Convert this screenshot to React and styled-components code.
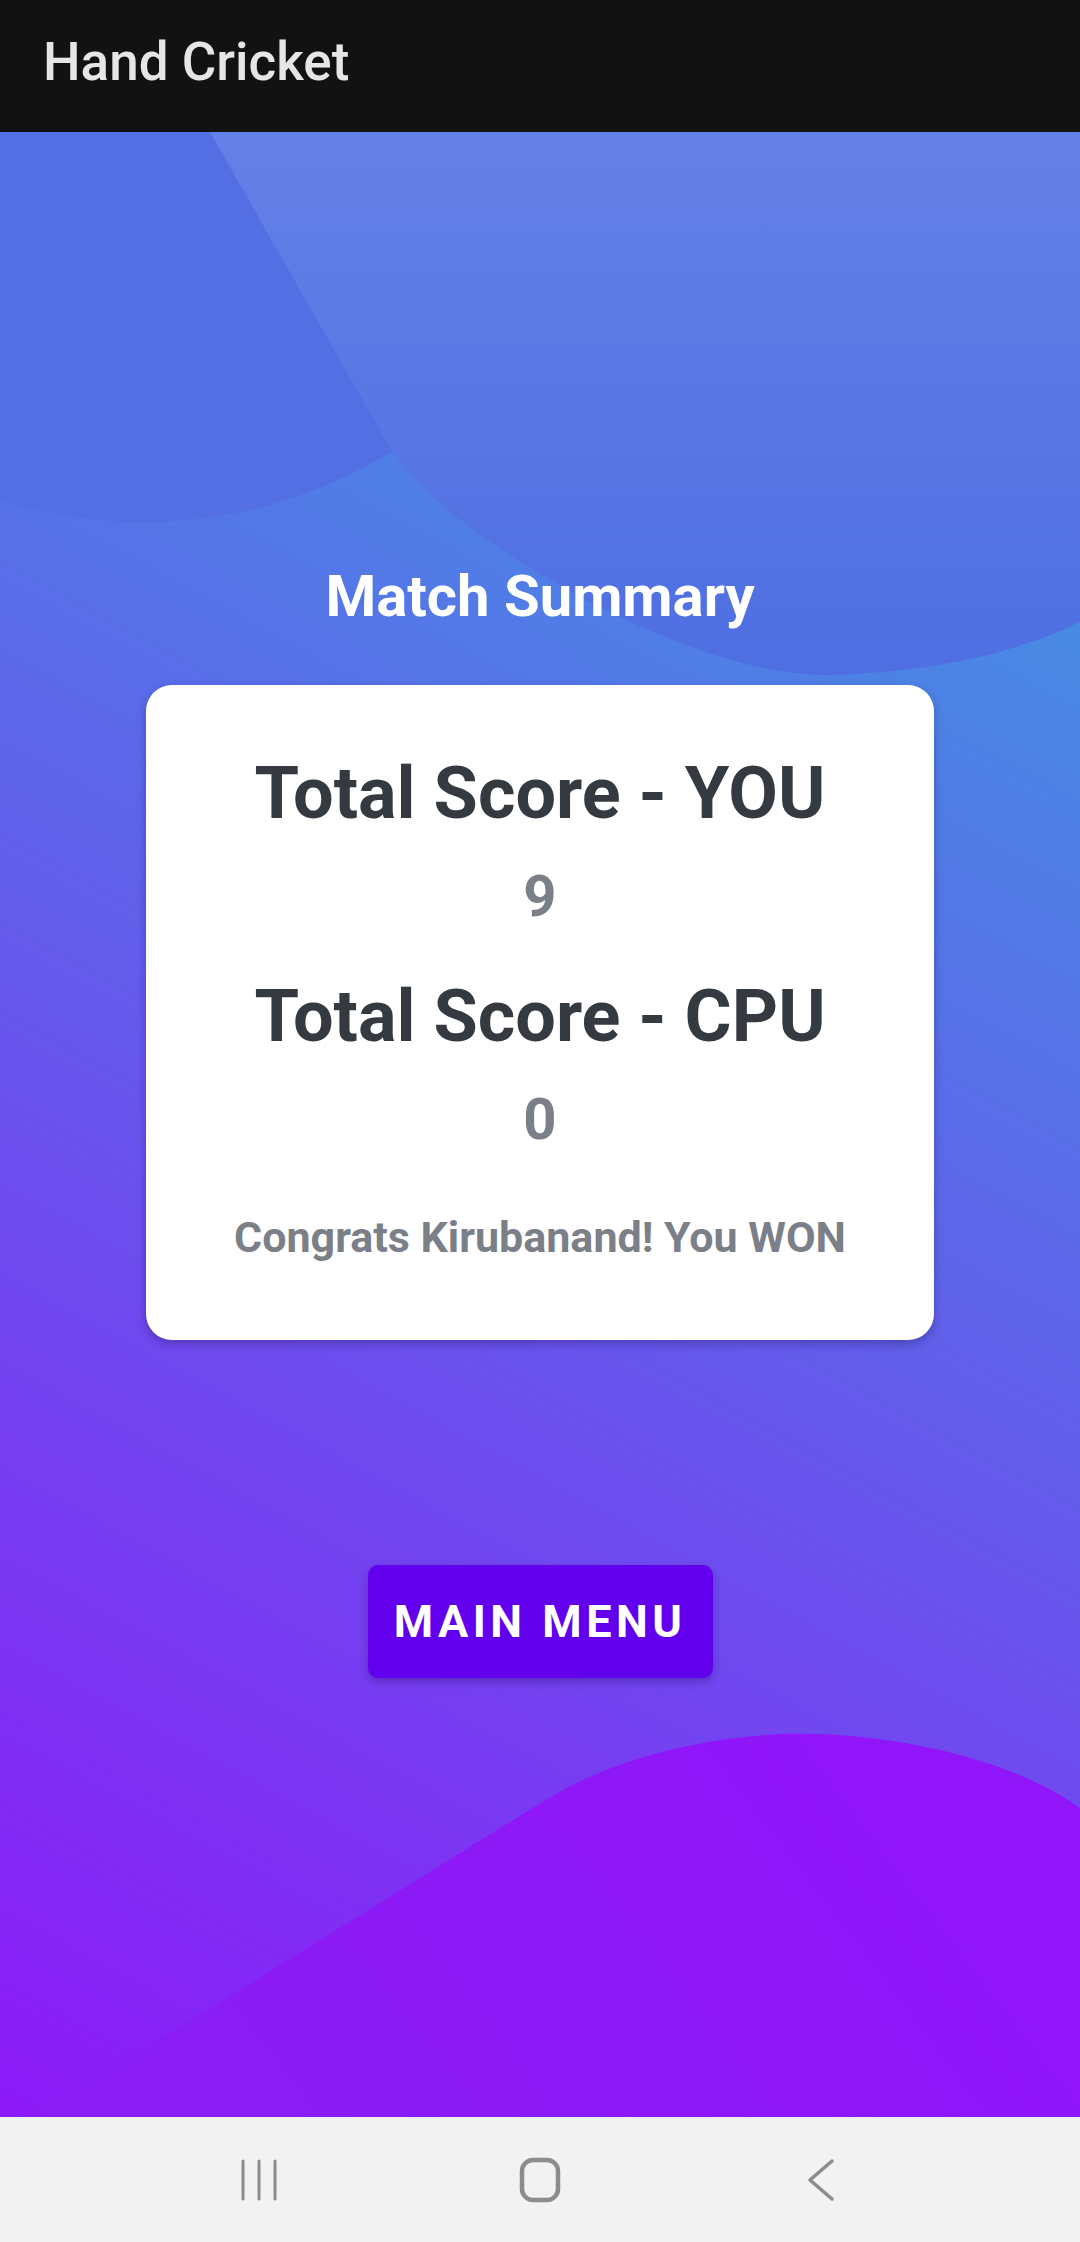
import styled, { createGlobalStyle } from "styled-components";

const GlobalStyle = createGlobalStyle`
  html, body {
    margin: 0;
    padding: 0;
    background: #121212;
  }
  body {
    font-family: Roboto, "Noto Sans", "Liberation Sans", sans-serif;
  }
  * {
    box-sizing: border-box;
  }
`;

const Backdrop = () => (
  <Decor viewBox="0 0 1080 1985" preserveAspectRatio="none">
    <defs>
      <linearGradient
        id="base"
        gradientUnits="userSpaceOnUse"
        x1="1080"
        y1="0"
        x2="0"
        y2="1985"
      >
        <stop offset="0" stopColor="#39a5df" />
        <stop offset="0.5" stopColor="#6160eb" />
        <stop offset="1" stopColor="#8d19f8" />
      </linearGradient>
      <linearGradient
        id="topWave"
        gradientUnits="userSpaceOnUse"
        x1="0"
        y1="0"
        x2="0"
        y2="545"
      >
        <stop offset="0" stopColor="#6581e7" />
        <stop offset="1" stopColor="#4e6ee2" />
      </linearGradient>
      <linearGradient
        id="lowWave"
        gradientUnits="userSpaceOnUse"
        x1="800"
        y1="1600"
        x2="300"
        y2="1985"
      >
        <stop offset="0" stopColor="#9015f9" />
        <stop offset="1" stopColor="#8a1cf4" />
      </linearGradient>
    </defs>
    <rect x="0" y="0" width="1080" height="1985" fill="url(#base)" />
    <circle cx="143" cy="-86" r="476" fill="#546fe4" />
    <path
      d="M 205 -10 L 210 0 L 393 321 C 433 391 680 545 826 543 C 930 541 1020 520 1080 490 L 1080 -10 Z"
      fill="url(#topWave)"
    />
    <path
      d="M 35 1985 L 544 1669 C 629 1616 740 1600 813 1602 C 890 1603 1010 1625 1080 1676 L 1080 1985 Z"
      fill="url(#lowWave)"
    />
  </Decor>
);

const RecentsIcon = () => (
  <svg width="36" height="44" viewBox="0 0 36 44">
    <g stroke="#8c8c8c" strokeWidth="3" strokeLinecap="round">
      <line x1="2" y1="3" x2="2" y2="41" />
      <line x1="18" y1="3" x2="18" y2="41" />
      <line x1="34" y1="3" x2="34" y2="41" />
    </g>
  </svg>
);

const HomeIcon = () => (
  <svg width="44" height="46" viewBox="0 0 44 46">
    <rect
      x="4"
      y="3"
      width="36"
      height="40"
      rx="11"
      fill="none"
      stroke="#8c8c8c"
      strokeWidth="4.5"
    />
  </svg>
);

const BackIcon = () => (
  <svg width="28" height="44" viewBox="0 0 28 44">
    <polyline
      points="25,3 3,22 25,41"
      fill="none"
      stroke="#8c8c8c"
      strokeWidth="3.5"
      strokeLinecap="round"
      strokeLinejoin="round"
    />
  </svg>
);

const App = () => {
  const scores = [
    { label: "Total Score - YOU", value: 9 },
    { label: "Total Score - CPU", value: 0 },
  ];

  return (
    <Screen>
      <GlobalStyle />
      <AppBar>
        <AppTitle>Hand Cricket</AppTitle>
      </AppBar>

      <Content>
        <Backdrop />
        <Body>
          <Heading>Match Summary</Heading>
          <Card>
            {scores.map((s, i) => (
              <ScoreBlock key={s.label} first={i === 0}>
                <ScoreLabel>{s.label}</ScoreLabel>
                <ScoreValue>{s.value}</ScoreValue>
              </ScoreBlock>
            ))}
            <Result>Congrats Kirubanand! You WON</Result>
          </Card>
          <MenuButton>MAIN MENU</MenuButton>
        </Body>
      </Content>

      <NavBar>
        <NavKey>
          <RecentsIcon />
        </NavKey>
        <NavKey>
          <HomeIcon />
        </NavKey>
        <NavKey>
          <BackIcon />
        </NavKey>
      </NavBar>
    </Screen>
  );
};

export default App;

const Screen = styled.div`
  width: 1080px;
  height: 2242px;
  display: flex;
  flex-direction: column;
  overflow: hidden;
`;

const AppBar = styled.header`
  height: 132px;
  flex-shrink: 0;
  background: #121212;
  display: flex;
  align-items: center;
  padding: 0 0 8px 43px;
`;

const AppTitle = styled.h1`
  margin: 0;
  font-size: 53px;
  line-height: 1;
  font-weight: 500;
  color: #e6e6e6;
`;

const Content = styled.main`
  flex: 1;
  position: relative;
  overflow: hidden;
`;

const Decor = styled.svg`
  position: absolute;
  inset: 0;
  width: 100%;
  height: 100%;
  display: block;
`;

const Body = styled.div`
  position: relative;
  z-index: 1;
  display: flex;
  flex-direction: column;
  align-items: center;
  padding-top: 435px;
`;

const Heading = styled.h2`
  margin: 0;
  font-size: 58px;
  line-height: 1;
  font-weight: 700;
  color: #ffffff;
`;

const Card = styled.section`
  margin-top: 60px;
  width: 788px;
  background: #ffffff;
  border-radius: 26px;
  padding: 73px 0 81px;
  display: flex;
  flex-direction: column;
  align-items: center;
  box-shadow: 0 4px 10px rgba(20, 10, 60, 0.3);
`;

const ScoreBlock = styled.div`
  display: flex;
  flex-direction: column;
  align-items: center;
  margin-top: ${(p) => (p.first ? "0" : "56px")};
`;

const ScoreLabel = styled.div`
  font-size: 72px;
  line-height: 1;
  font-weight: 700;
  color: #343a40;
`;

const ScoreValue = styled.div`
  margin-top: 37px;
  font-size: 58px;
  line-height: 1;
  font-weight: 700;
  color: #7b8088;
`;

const Result = styled.p`
  margin: 68px 0 0;
  font-size: 43px;
  line-height: 1;
  font-weight: 700;
  color: #7b8088;
`;

const MenuButton = styled.button`
  margin-top: 225px;
  width: 345px;
  height: 113px;
  border: none;
  border-radius: 10px;
  background: #6200ee;
  color: #ffffff;
  font-family: Roboto, "Noto Sans", sans-serif;
  font-size: 45px;
  font-weight: 700;
  letter-spacing: 4.5px;
  box-shadow: 0 4px 8px rgba(30, 0, 80, 0.3);
  cursor: pointer;
`;

const NavBar = styled.nav`
  height: 125px;
  flex-shrink: 0;
  background: #f2f2f2;
  display: grid;
  grid-template-columns: repeat(3, 281px);
  justify-content: center;
  align-items: center;
`;

const NavKey = styled.div`
  display: flex;
  justify-content: center;
  align-items: center;
`;
